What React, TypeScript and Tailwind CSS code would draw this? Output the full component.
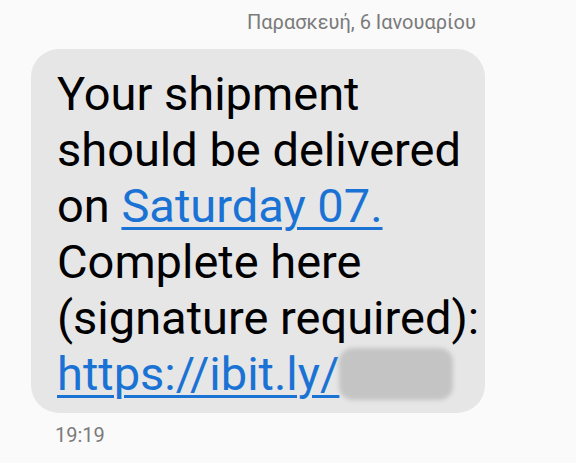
export default function App() {
  return (
    <div className="w-[576px] h-[463px] bg-[#fafafa] overflow-hidden" style={{ fontFamily: "Roboto, 'Noto Sans', sans-serif" }}>
      <div className="pt-[8px] pl-[247px] text-[20px] leading-[28px] text-[#7b7b7b]">
        Παρασκευή, 6 Ιανουαρίου
      </div>
      <div className="ml-[31px] mt-[13px] w-[454px] rounded-[28px] bg-[#e6e6e6] pl-[26px] pr-[4px] pt-[17px] pb-[11px]">
        <p className="text-[47px] leading-[56px] text-black">
          Your shipment
          <br />
          should be delivered
          <br />
          on{" "}
          <span className="text-[#1a73d4] underline decoration-[3px] underline-offset-[5px]">Saturday 07.</span>
          <br />
          Complete here
          <br />
          (signature required):
          <br />
          <span className="text-[#1a73d4] underline decoration-[3px] underline-offset-[5px]">https://ibit.ly/</span>
          <span className="inline-block align-[-10px] w-[114px] h-[52px] rounded-[14px] bg-[#c4c4c4] blur-[2px]" />
        </p>
      </div>
      <div className="pl-[55px] pt-[10px] text-[20px] leading-[24px] text-[#7b7b7b]">19:19</div>
    </div>
  );
}
